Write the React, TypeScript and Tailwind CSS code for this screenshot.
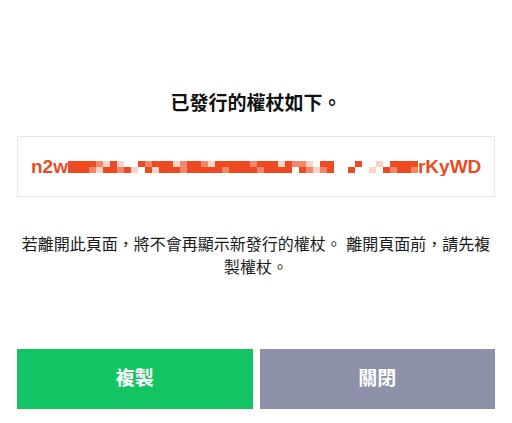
const rowA = "xxxxmlxl..xmxxxlmxxmlxxxxxmxxxlxmml.xx...x..l.xxxxx";
const rowB = "xxxmlxxmxl.xlxxxmxxxxxmxxxxmxxxx.xmlmx..x..l.xmxxm";

const shade = (c: string) => {
  if (c === "x") return "bg-[#ee4a22]";
  if (c === "m") return "bg-[#f4866a]";
  if (c === "l") return "bg-[#fbd2c6]";
  return "bg-white";
};

const Censor = () => (
  <div className="flex flex-col shrink-0">
    {[rowA.slice(0, 50), rowB.slice(0, 50)].map((row, i) => (
      <div key={i} className="flex">
        {row.split("").map((c, j) => (
          <div key={j} className={`w-[7px] h-[6px] ${shade(c)}`} />
        ))}
      </div>
    ))}
  </div>
);

const App = () => {
  return (
    <div
      className="w-[512px] h-[423px] bg-white px-[17px] pt-[91px]"
      style={{ fontFamily: '"Liberation Sans", "Noto Sans CJK TC", sans-serif' }}
    >
      <h1 className="text-center text-[19px] leading-[26px] font-bold text-[#111]">
        已發行的權杖如下。
      </h1>

      <div className="mt-[19px] h-[61px] border border-[#e6e6e6] flex items-center pl-[13px] pr-[13px]">
        <div className="flex-1 overflow-hidden">
          <div className="flex items-center text-[#ee4a22] text-[19px] font-bold leading-none whitespace-nowrap">
            <span>n2w</span>
            <Censor />
            <span>rKyWD</span>
          </div>
        </div>
      </div>

      <p className="mt-[36px] text-center text-[16px] leading-[23px] text-[#1a1a1a]">
        若離開此頁面，將不會再顯示新發行的權杖。 離開頁面前，請先複製權杖。
      </p>

      <div className="mt-[70px] flex gap-[7px]">
        <button className="flex-1 h-[60px] bg-[#13c464] text-white text-[19px] font-bold">
          複製
        </button>
        <button className="flex-1 h-[60px] bg-[#8d91a9] text-white text-[19px] font-bold">
          關閉
        </button>
      </div>
    </div>
  );
};

export default App;
